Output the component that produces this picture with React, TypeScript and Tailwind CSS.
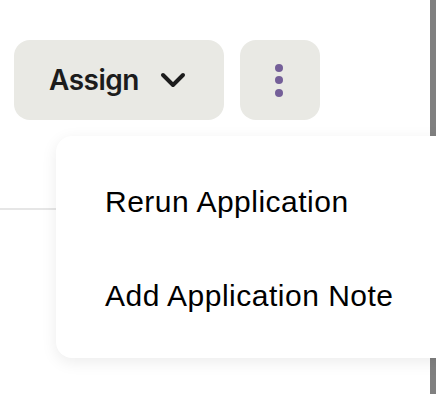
import React from 'react';

function App() {
  return (
    <div className="relative h-[394px] w-[436px] overflow-hidden bg-white">
      <div className="flex h-full">
        {/* Main content */}
        <div className="flex-1">
          <div className="flex gap-4 pl-[14px] pt-10">
            <button
              className="flex h-20 w-[210px] items-center rounded-2xl bg-[#e9e9e4] pl-[35px] text-[28px] font-semibold tracking-[-0.5px] text-[#1c1c1c]"
              style={{ fontFamily: 'Inter, sans-serif' }}
            >
              Assign
              <svg className="ml-[21px]" width="26" height="16" viewBox="0 0 26 16" fill="none">
                <path d="M3 3l10 10 10-10" stroke="#1c1c1c" strokeWidth="4" strokeLinecap="round" strokeLinejoin="round" />
              </svg>
            </button>
            <button className="flex h-20 w-20 flex-col items-center justify-center gap-[4.5px] rounded-2xl bg-[#e9e9e4] pr-[3px]">
              <span className="h-2 w-2 rounded-full bg-[#745f98]" />
              <span className="h-2 w-2 rounded-full bg-[#745f98]" />
              <span className="h-2 w-2 rounded-full bg-[#745f98]" />
            </button>
          </div>
          <div className="mt-[88px] h-[2px] bg-[#e6e6e6]" />
        </div>
        {/* Scrollbar */}
        <div className="w-[6px] bg-[#808080]" />
      </div>

      {/* Dropdown menu */}
      <div
        className="absolute left-[56px] top-[136px] w-[420px] rounded-2xl bg-white pt-[19px] pb-[15px] shadow-[0_4px_16px_rgba(0,0,0,0.08)]"
        style={{ fontFamily: '"Liberation Sans", Arial, sans-serif' }}
      >
        <div className="py-[29px] pl-[49px] text-[30px] leading-[36px] tracking-[0.5px] text-black">Rerun Application</div>
        <div className="py-[29px] pl-[49px] text-[30px] leading-[36px] tracking-[0.5px] text-black">Add Application Note</div>
      </div>
    </div>
  );
}

export default App;
